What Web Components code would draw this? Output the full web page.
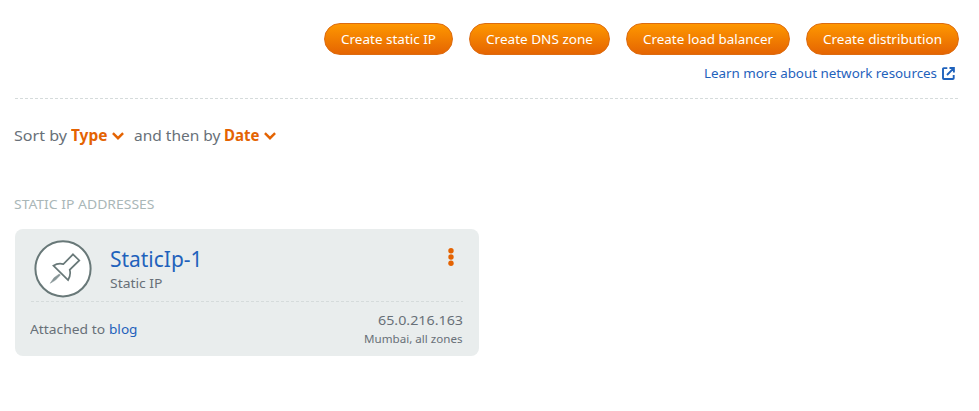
<!DOCTYPE html>
<html lang="en">
<head>
<meta charset="utf-8">
<title>Network resources</title>
<style>
body { margin: 0; background: #fff; }
</style>
</head>
<body>
<network-page></network-page>
<script>
const define = (name, html, setup) => {
  const template = document.createElement('template');
  template.innerHTML = html;
  customElements.define(name, class extends HTMLElement {
    constructor() {
      super();
      this.attachShadow({ mode: 'open' }).append(template.content.cloneNode(true));
    }
    connectedCallback() { if (setup) setup(this); }
  });
};

// Text run whose letters are widened or condensed to fill a given width.
define('fit-text', `
  <style>
    :host { display: block; flex: none; white-space: nowrap; text-align: left; }
    span { display: inline-block; transform-origin: 0 50%; vertical-align: top; }
  </style>
  <span><slot></slot></span>`, el => {
  const span = el.shadowRoot.querySelector('span');
  const target = Number(el.getAttribute('width'));
  const natural = span.getBoundingClientRect().width;
  el.style.width = target + 'px';
  span.style.transform = `scaleX(${target / natural})`;
});

define('pill-button', `
  <style>
    :host { display: block; }
    button { display: flex; align-items: center; height: 32px; padding: 0 16px; box-sizing: border-box;
      border: 1px solid #dd6b10; border-radius: 16px; color: #fff; font: inherit; font-size: 13px; line-height: 18px;
      background: linear-gradient(#ff9900, #e46302) border-box; }
  </style>
  <button><slot></slot></button>`);

define('external-icon', `
  <style>:host { display: block; width: 13px; height: 13px; } svg { display: block; }</style>
  <svg width="13" height="13" viewBox="0 0 13 13" fill="none" stroke="#1f62bc" stroke-width="1.9">
    <path d="M5.3 1.1H1.8Q1 1.1 1 1.9v9.3q0 .8.8.8h9q.9 0 .9-.8V8M5 8l6.3-6.3M7.5 1h4.4v4.5"/>
  </svg>`);

define('chevron-icon', `
  <style>:host { display: block; width: 12px; height: 8px; margin-top: 1px; } svg { display: block; }</style>
  <svg width="12" height="8" viewBox="0 0 12 8" fill="none" stroke="#e46302" stroke-width="2.4">
    <path d="M.9 1.1 6 6.2l5.1-5.1"/>
  </svg>`);

define('pin-icon', `
  <style>:host { display: block; width: 58px; height: 58px; } svg { display: block; }</style>
  <svg width="58" height="58" viewBox="0 0 58 58" stroke="#687878">
    <circle cx="29" cy="28.8" r="27.6" fill="#fff" stroke-width="2"/>
    <path d="M39 14.3 45.3 20.4 35.7 29.8Q37.2 34.5 34.1 40L19.4 25.7Q24 22.7 29.4 24.1Z" fill="none" stroke-width="1.7"/>
    <path d="M25.3 33.9 20 37.8 16.2 43.3 21.5 40.1 26.4 35Z" fill="#879596" stroke="#879596" stroke-width=".5"/>
  </svg>`);

define('menu-dots', `
  <style>:host { display: block; width: 6px; height: 18px; } svg { display: block; }</style>
  <svg width="6" height="18" viewBox="0 0 6 18" fill="#e46302">
    <circle cx="3" cy="2.8" r="2.7"/><circle cx="3" cy="9" r="2.7"/><circle cx="3" cy="15.2" r="2.7"/>
  </svg>`);

define('dashed-rule', `
  <style>:host { display: block; height: 1px; background: repeating-linear-gradient(90deg, #d5dbdb 0 3px, transparent 3px 5px); }</style>`);

define('page-actions', `
  <style>
    :host { display: flex; flex-direction: column; align-items: flex-end; }
    nav { display: flex; gap: 16px; }
    a { display: flex; align-items: center; gap: 5px; margin: 8px 4px 0 0; height: 20px; font-size: 13px; line-height: 20px; color: #1f62bc; }
  </style>
  <nav>
    <pill-button><fit-text width="95">Create static IP</fit-text></pill-button>
    <pill-button><fit-text width="107">Create DNS zone</fit-text></pill-button>
    <pill-button><fit-text width="130">Create load balancer</fit-text></pill-button>
    <pill-button><fit-text width="119">Create distribution</fit-text></pill-button>
  </nav>
  <a><fit-text width="233">Learn more about network resources</fit-text><external-icon></external-icon></a>`);

define('sort-bar', `
  <style>
    :host { display: flex; align-items: center; height: 24px; font-size: 15px; line-height: 24px; color: #687078; margin-left: -1px; }
    b { color: #e46302; font-size: 16px; font-weight: 700; margin: 0 4.5px 0 4px; }
    .next { margin-left: 9.5px; }
  </style>
  <fit-text width="53">Sort by</fit-text><b><fit-text width="36.5">Type</fit-text></b><chevron-icon></chevron-icon>
  <fit-text class="next" width="86.5">and then by</fit-text><b><fit-text width="35.5">Date</fit-text></b><chevron-icon></chevron-icon>`);

define('resource-card', `
  <style>
    :host { display: block; box-sizing: border-box; width: 464px; height: 127px; padding: 11px 16px 0;
      border-radius: 8px; background: #e9eded; color: #687078; font-size: 13px; }
    header { display: flex; height: 61px; padding-left: 3px; }
    .title { margin-left: 18px; flex: 1; padding-top: 3px; }
    .name { color: #1f62bc; font-size: 22px; line-height: 30px; }
    .kind { line-height: 18px; margin-top: 1px; }
    menu-dots { margin: 8px 9px 0 0; }
    footer { display: flex; justify-content: space-between; align-items: center; height: 54px; }
    .attached { display: flex; gap: 4px; line-height: 18px; margin-left: -1px; }
    .attached a { color: #1f62bc; }
    .place { display: flex; flex-direction: column; align-items: flex-end; line-height: 18px; padding: 1px .5px 0 0; }
    .zone { font-size: 11.5px; line-height: 18px; margin-top: 1px; }
  </style>
  <header>
    <pin-icon></pin-icon>
    <div class="title">
      <fit-text class="name" width="92.5">StaticIp-1</fit-text>
      <fit-text class="kind" width="52.5">Static IP</fit-text>
    </div>
    <menu-dots></menu-dots>
  </header>
  <dashed-rule></dashed-rule>
  <footer>
    <div class="attached"><fit-text width="75">Attached to</fit-text><a><fit-text width="28.5">blog</fit-text></a></div>
    <div class="place">
      <fit-text width="85">65.0.216.163</fit-text>
      <fit-text class="zone" width="98.5">Mumbai, all zones</fit-text>
    </div>
  </footer>`);

define('network-page', `
  <style>
    :host { display: block; box-sizing: border-box; width: 979px; height: 411px; padding: 23px 20px 0 15px;
      font-family: "Noto Sans", "Open Sans", sans-serif; }
    .rule { margin-top: 15px; }
    sort-bar { margin-top: 24px; }
    .heading { color: #aab7b8; font-size: 13px; line-height: 20px; margin: 47px 0 15px -1px; }
  </style>
  <page-actions></page-actions>
  <dashed-rule class="rule"></dashed-rule>
  <sort-bar></sort-bar>
  <fit-text class="heading" width="140.5">STATIC IP ADDRESSES</fit-text>
  <resource-card></resource-card>`);
</script>
</body>
</html>
